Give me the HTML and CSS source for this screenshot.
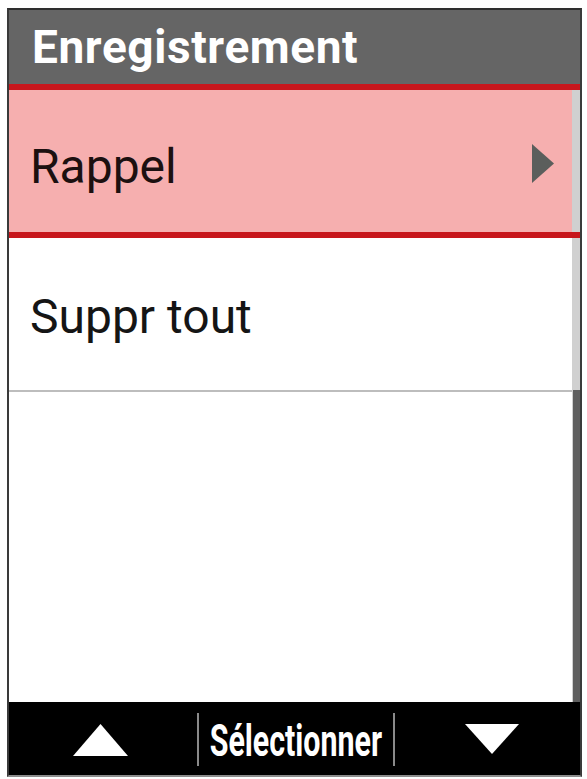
FILE: index.html
```html
<!DOCTYPE html>
<html lang="fr">
<head>
<meta charset="utf-8">
<title>Enregistrement</title>
<link rel="stylesheet" href="styles.css">
</head>
<body>
<div class="device">
  <div class="screen">
    <header class="title">Enregistrement</header>
    <div class="row row-selected">
      <span class="label">Rappel</span>
      <svg class="chevron" width="22" height="39" viewBox="0 0 22 39"><polygon points="0,0 22,19.5 0,39" fill="#5b5e5c"/></svg>
    </div>
    <div class="row row-plain">
      <span class="label">Suppr tout</span>
    </div>
    <div class="spacer"></div>
    <div class="scrollbar"><div class="thumb"></div></div>
    <nav class="softkeys">
      <div class="key key-up">
        <svg width="55" height="32" viewBox="0 0 55 32"><polygon points="27.5,0 55,32 0,32" fill="#ffffff"/></svg>
      </div>
      <div class="sep"></div>
      <div class="key key-mid"><span class="key-text">Sélectionner</span></div>
      <div class="sep"></div>
      <div class="key key-down">
        <svg width="54" height="30" viewBox="0 0 54 30"><polygon points="0,0 54,0 27,30" fill="#ffffff"/></svg>
      </div>
    </nav>
  </div>
</div>
</body>
</html>
```

FILE: styles.css
```css
html, body {
  margin: 0;
  padding: 0;
  background: #ffffff;
  overflow: hidden;
}

.device {
  margin: 8px 0 0 7px;
  width: 571px;
  height: 765px;
  border-top: 2px solid #2e2e2e;
  border-left: 2px solid #3a3a3a;
  border-right: 2px solid #3a3a3a;
  border-bottom: 2px solid #8c8c8c;
  font-family: Roboto, "Liberation Sans", sans-serif;
}

.screen {
  position: relative;
  display: flex;
  flex-direction: column;
  height: 100%;
  background: #ffffff;
}

.title {
  height: 74px;
  box-sizing: border-box;
  padding: 14px 0 0 23px;
  background: #656565;
  color: #ffffff;
  font-weight: 700;
  font-size: 46px;
  line-height: 46px;
  letter-spacing: 0.6px;
}

.row {
  display: flex;
  align-items: flex-start;
  justify-content: space-between;
  box-sizing: border-box;
  padding-left: 21px;
  font-size: 48px;
  line-height: 48px;
  color: #151515;
}

.row-selected {
  position: relative;
  height: 148px;
  padding-top: 53px;
  padding-right: 26px;
  background: #f6afaf;
  border-top: 6px solid #c7161c;
  color: #1c1010;
}

.row-selected::after {
  content: "";
  position: absolute;
  left: 0;
  right: 0;
  bottom: -6px;
  height: 6px;
  background: #c7161c;
  z-index: 2;
}

.chevron {
  margin-top: 1px;
}

.row-plain {
  height: 160px;
  padding-top: 55px;
  border-top: 6px solid transparent;
  border-bottom: 2px solid #bdbdbd;
}

.spacer {
  flex: 1;
}

.scrollbar {
  position: absolute;
  right: 0;
  top: 80px;
  bottom: 73px;
  width: 8px;
  background: #d0d0d0;
  z-index: 1;
}

.thumb {
  position: absolute;
  right: 0;
  top: 300px;
  bottom: 0;
  width: 7px;
  background: #5f5f5f;
}

.softkeys {
  height: 73px;
  display: grid;
  grid-template-columns: 188px 2px 194px 2px 1fr;
  background: #000000;
}

.key {
  display: flex;
  justify-content: center;
  align-items: flex-start;
}

.key-up {
  padding-top: 22px;
  padding-right: 5px;
}

.key-down {
  padding-top: 22px;
  padding-left: 9px;
}

.key-mid {
  padding-top: 17px;
}

.key-text {
  display: inline-block;
  color: #ffffff;
  font-weight: 700;
  font-size: 44px;
  line-height: 44px;
  transform: scaleX(0.69);
  transform-origin: center;
  white-space: nowrap;
}

.sep {
  margin-top: 11px;
  height: 53px;
  background: #8a8a8a;
}
```
